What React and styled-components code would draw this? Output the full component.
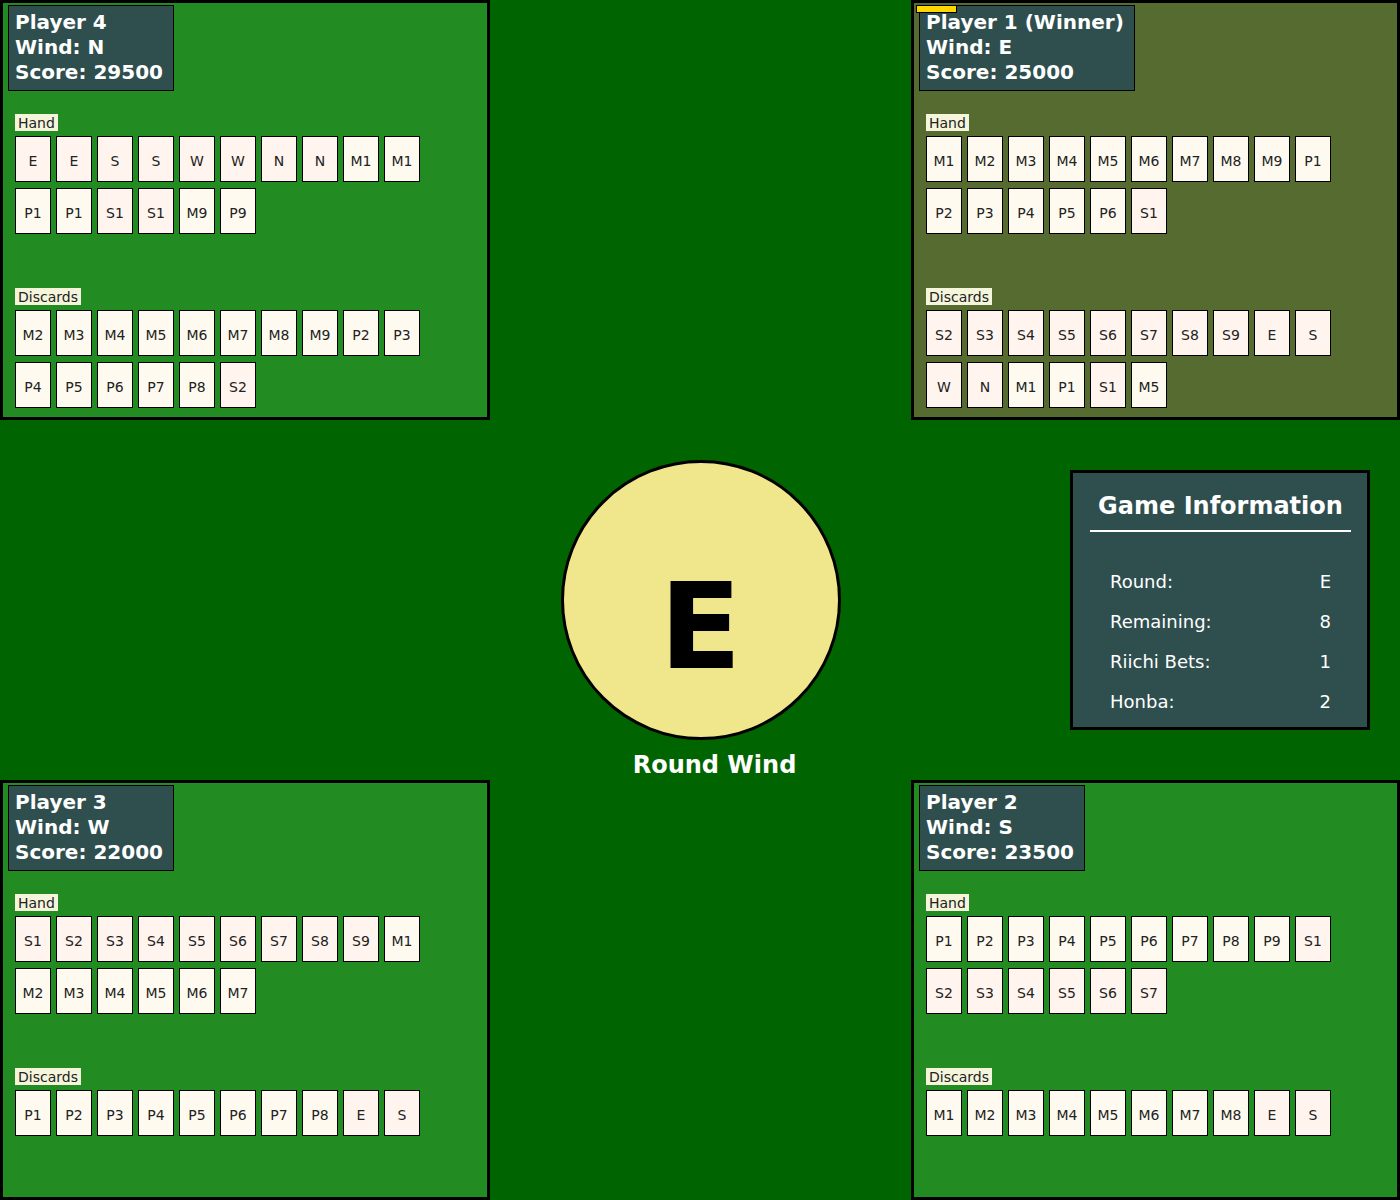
import React from "react";
import styled, { createGlobalStyle } from "styled-components";

const Global = createGlobalStyle`
  html, body { margin: 0; padding: 0; }
  body {
    background: #006400;
    font-family: "DejaVu Sans", Verdana, sans-serif;
  }
  * { box-sizing: border-box; }
`;

const Table = styled.div`
  width: 1400px;
  height: 1200px;
  display: grid;
  grid-template-columns: 490px 1fr 489px;
  grid-template-rows: 420px 360px 420px;
  background: #006400;
`;

const Panel = styled.section`
  position: relative;
  border: 3px solid #000;
  background: ${(p) => (p.$winner ? "#556B2F" : "#228B22")};
  padding: 2px 12px 0 12px;
  display: flex;
  flex-direction: column;
  align-items: flex-start;
`;

const WinnerMark = styled.div`
  position: absolute;
  top: 2px;
  left: 2px;
  width: 41px;
  height: 8px;
  background: #ffd700;
  border: 1px solid #000;
  z-index: 2;
`;

const InfoBox = styled.div`
  margin-left: -7px;
  background: #2f4f4f;
  border: 1px solid #000;
  color: #fff;
  font-weight: bold;
  font-size: 20px;
  line-height: 25px;
  padding: 4px 10px 5px 6px;
`;

const Section = styled.div`
  display: flex;
  flex-direction: column;
  align-items: flex-start;
  gap: 5px;
  margin-top: ${(p) => p.$top || 0}px;
`;

const Label = styled.span`
  background: #f5f5dc;
  color: #222;
  font-size: 14px;
  line-height: 16px;
  padding: 1px 3px 0 3px;
`;

const TileGrid = styled.div`
  display: grid;
  grid-template-columns: repeat(10, 36px);
  grid-auto-rows: 46px;
  column-gap: 5px;
  row-gap: 6px;
  min-height: ${(p) => p.$minH || 0}px;
  align-content: start;
`;

const Tile = styled.div`
  width: 36px;
  height: 46px;
  border: 1px solid #000;
  background: ${(p) => (p.$soft ? "#fff5ee" : "#fffaf0")};
  color: #222;
  font-size: 14px;
  padding-top: 4px;
  display: flex;
  align-items: center;
  justify-content: center;
`;

const Middle = styled.div`
  display: flex;
  flex-direction: column;
  align-items: center;
  padding-top: 40px;
`;

const WindCircle = styled.div`
  width: 280px;
  height: 280px;
  border-radius: 50%;
  border: 3px solid #000;
  background: #f0e68c;
  display: flex;
  align-items: center;
  justify-content: center;
  padding-top: 54px;
  font-size: 120px;
  font-weight: bold;
  color: #000;
  line-height: 1;
`;

const WindLabel = styled.div`
  margin-top: 11px;
  margin-left: 28px;
  color: #fff;
  font-size: 24px;
  font-weight: bold;
  line-height: 28px;
`;

const RightCell = styled.div`
  display: flex;
  align-items: center;
  justify-content: flex-end;
  padding-right: 30px;
`;

const GameInfo = styled.div`
  width: 300px;
  height: 260px;
  background: #2f4f4f;
  border: 3px solid #000;
  padding: 19px 16px 0 17px;
  color: #fff;
`;

const GameTitle = styled.div`
  font-size: 24px;
  font-weight: bold;
  text-align: center;
  line-height: 28px;
  padding-bottom: 10px;
  border-bottom: 2px solid #fff;
`;

const InfoRows = styled.div`
  display: flex;
  flex-direction: column;
  padding: 39px 20px 0 20px;
`;

const InfoRow = styled.div`
  display: flex;
  justify-content: space-between;
  font-size: 18px;
  height: 40px;
  line-height: 22px;
`;

const soft = (t) => (t.startsWith("S") && t.length === 2) || ["E", "S", "W", "N"].includes(t);

function TileRow({ tiles, minH }) {
  return (
    <TileGrid $minH={minH}>
      {tiles.map((t, i) => (
        <Tile key={i} $soft={soft(t)}>{t}</Tile>
      ))}
    </TileGrid>
  );
}

function PlayerPanel({ name, wind, score, hand, discards, winner }) {
  return (
    <Panel $winner={winner}>
      {winner && <WinnerMark />}
      <InfoBox>
        <div>{name}</div>
        <div>Wind: {wind}</div>
        <div>Score: {score}</div>
      </InfoBox>
      <Section $top={23}>
        <Label>Hand</Label>
        <TileRow tiles={hand} minH={152} />
      </Section>
      <Section>
        <Label>Discards</Label>
        <TileRow tiles={discards} />
      </Section>
    </Panel>
  );
}

const r = (p, a, b) => Array.from({ length: b - a + 1 }, (_, i) => p + (a + i));

const players = {
  p4: {
    name: "Player 4", wind: "N", score: 29500,
    hand: ["E", "E", "S", "S", "W", "W", "N", "N", "M1", "M1", "P1", "P1", "S1", "S1", "M9", "P9"],
    discards: [...r("M", 2, 9), "P2", "P3", "P4", "P5", "P6", "P7", "P8", "S2"],
  },
  p1: {
    name: "Player 1 (Winner)", wind: "E", score: 25000, winner: true,
    hand: [...r("M", 1, 9), ...r("P", 1, 6), "S1"],
    discards: [...r("S", 2, 9), "E", "S", "W", "N", "M1", "P1", "S1", "M5"],
  },
  p3: {
    name: "Player 3", wind: "W", score: 22000,
    hand: [...r("S", 1, 9), ...r("M", 1, 7)],
    discards: [...r("P", 1, 8), "E", "S"],
  },
  p2: {
    name: "Player 2", wind: "S", score: 23500,
    hand: [...r("P", 1, 9), ...r("S", 1, 7)],
    discards: [...r("M", 1, 8), "E", "S"],
  },
};

export default function App() {
  return (
    <>
      <Global />
      <Table>
        <PlayerPanel {...players.p4} />
        <div />
        <PlayerPanel {...players.p1} />
        <div />
        <Middle>
          <WindCircle>E</WindCircle>
          <WindLabel>Round Wind</WindLabel>
        </Middle>
        <RightCell>
          <GameInfo>
            <GameTitle>Game Information</GameTitle>
            <InfoRows>
              <InfoRow><span>Round:</span><span>E</span></InfoRow>
              <InfoRow><span>Remaining:</span><span>8</span></InfoRow>
              <InfoRow><span>Riichi Bets:</span><span>1</span></InfoRow>
              <InfoRow><span>Honba:</span><span>2</span></InfoRow>
            </InfoRows>
          </GameInfo>
        </RightCell>
        <PlayerPanel {...players.p3} />
        <div />
        <PlayerPanel {...players.p2} />
      </Table>
    </>
  );
}
